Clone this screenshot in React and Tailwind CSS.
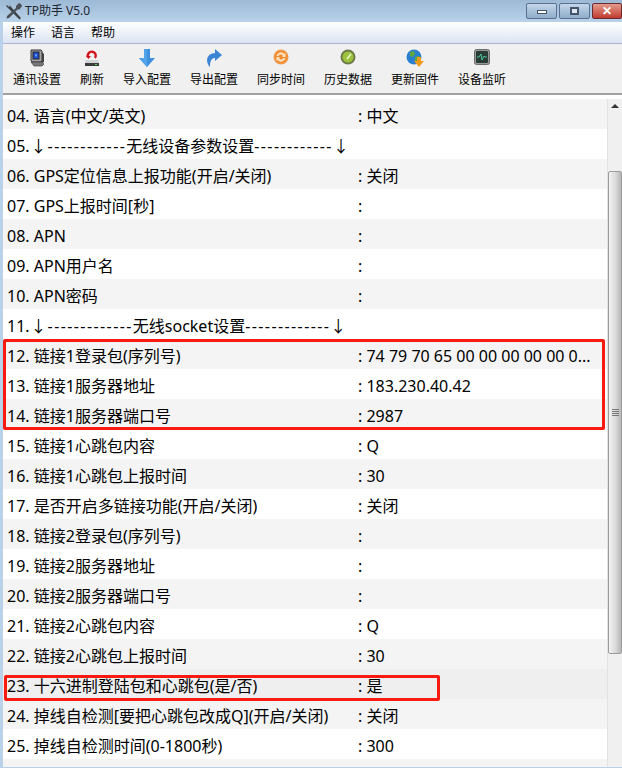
const cjk = "font-['Noto_Sans','Noto_Sans_CJK_SC',sans-serif]";

const rows = [
  ["04. 语言(中文/英文)", ": 中文"],
  ["05. ↓------------无线设备参数设置------------↓", ""],
  ["06. GPS定位信息上报功能(开启/关闭)", ": 关闭"],
  ["07. GPS上报时间[秒]", ":"],
  ["08. APN", ":"],
  ["09. APN用户名", ":"],
  ["10. APN密码", ":"],
  ["11. ↓-------------无线socket设置-------------↓", ""],
  ["12. 链接1登录包(序列号)", ": 74 79 70 65 00 00 00 00 00 0..."],
  ["13. 链接1服务器地址", ": 183.230.40.42"],
  ["14. 链接1服务器端口号", ": 2987"],
  ["15. 链接1心跳包内容", ": Q"],
  ["16. 链接1心跳包上报时间", ": 30"],
  ["17. 是否开启多链接功能(开启/关闭)", ": 关闭"],
  ["18. 链接2登录包(序列号)", ":"],
  ["19. 链接2服务器地址", ":"],
  ["20. 链接2服务器端口号", ":"],
  ["21. 链接2心跳包内容", ": Q"],
  ["22. 链接2心跳包上报时间", ": 30"],
  ["23. 十六进制登陆包和心跳包(是/否)", ": 是"],
  ["24. 掉线自检测[要把心跳包改成Q](开启/关闭)", ": 关闭"],
  ["25. 掉线自检测时间(0-1800秒)", ": 300"],
  ["", ""],
];

function ComputerIcon() {
  return (
    <svg width="18" height="18" viewBox="0 0 18 18">
      <path d="M3 1h10l1 1v10l-1 1H5l-2-1z" fill="#a4a4a8" stroke="#333" />
      <rect x="5" y="3" width="6" height="7" fill="#1f4fd0" stroke="#222" />
      <path d="M7 5l2 1-1 2z" fill="#9cc4f4" />
      <path d="M14 3l2 2v8l-2 1z" fill="#444" />
      <path d="M3 13l3 4h8l2-2-2-2H5z" fill="#77777a" stroke="#333" strokeWidth="0.6" />
    </svg>
  );
}

function RefreshIcon() {
  return (
    <svg width="18" height="18" viewBox="0 0 18 18">
      <path d="M5 8a4 4 0 1 1 7 1" fill="none" stroke="#d4141c" strokeWidth="2.4" />
      <path d="M3 7h5l-2.500 3z" fill="#c8141c" />
      <path d="M3 11h12l1 2v2H2v-2z" fill="#d2d4d6" />
      <rect x="2" y="14" width="14" height="3" fill="#3a3c3e" />
      <rect x="12" y="15" width="2" height="1" fill="#4ee04e" />
    </svg>
  );
}

function DownIcon() {
  return (
    <svg width="18" height="18" viewBox="0 0 18 18">
      <path d="M6 0h6v9h5l-8 9-8-9h5z" fill="#3f8fdc" />
      <path d="M6 0h3v18l-8-9h5z" fill="#52a2ea" />
    </svg>
  );
}

function UpRightIcon() {
  return (
    <svg width="18" height="18" viewBox="0 0 18 18">
      <path d="M10 0l7 6-7 6V9C7 9 5 11 5 18 1 14 0 5 10 4z" fill="#3a86d4" />
    </svg>
  );
}

function SyncIcon() {
  return (
    <svg width="16" height="16" viewBox="0 0 16 16">
      <circle cx="8" cy="8" r="7.500" fill="#ef9a48" />
      <circle cx="8" cy="8" r="6" fill="#f28a2c" />
      <path d="M3.500 7a4.500 4.500 0 0 1 8-2l1-1v4H9l1-1a2.500 2.500 0 0 0-4.500 0zM12.500 9a4.500 4.500 0 0 1-8 2l-1 1V8H7l-1 1a2.500 2.500 0 0 0 4.500 0z" fill="#fbe3c4" />
    </svg>
  );
}

function GaugeIcon() {
  return (
    <svg width="16" height="16" viewBox="0 0 16 16">
      <circle cx="8" cy="8" r="7.500" fill="#6f7a4a" />
      <circle cx="8" cy="8" r="5.500" fill="#9cc23e" />
      <path d="M7 10l4-5" stroke="#eef6d0" strokeWidth="1.500" />
    </svg>
  );
}

function GlobeIcon() {
  return (
    <svg width="18" height="18" viewBox="0 0 18 18">
      <circle cx="8" cy="8" r="7.500" fill="#2b7fd0" />
      <path d="M4 3l4-1 1 3-2 3-3-1zM9 8l4-1 1 3-3 4-2-2z" fill="#5fa83c" />
      <path d="M11 8h4v4h3l-5 6-5-6h3z" fill="#f29a1c" />
    </svg>
  );
}

function MonitorIcon() {
  return (
    <svg width="16" height="16" viewBox="0 0 16 16">
      <rect x="0.500" y="0.500" width="15" height="15" rx="2" fill="#9a9c9a" stroke="#6a6c6a" />
      <rect x="2" y="2" width="12" height="12" rx="1" fill="#2a3a36" />
      <path d="M3 8h2l2-3 1 6 2-4 1 1h2" fill="none" stroke="#4fd6a0" strokeWidth="0.900" />
    </svg>
  );
}

const tools = [
  ["通讯设置", <ComputerIcon />],
  ["刷新", <RefreshIcon />],
  ["导入配置", <DownIcon />],
  ["导出配置", <UpRightIcon />],
  ["同步时间", <SyncIcon />],
  ["历史数据", <GaugeIcon />],
  ["更新固件", <GlobeIcon />],
  ["设备监听", <MonitorIcon />],
];

function TitleBar() {
  return (
    <div className="h-[22px] flex items-center justify-between bg-gradient-to-b from-[#9db9d5] to-[#b9d2ea]">
      <div className="flex items-center">
        <svg width="18" height="18" viewBox="0 0 18 18" className="ml-[5px]">
          <path d="M3 1l4 5 9 10-1.500 1.500L5 8 1 4l1-1 2 2 1-1z" fill="#3c4248" />
          <path d="M16 2l-2-1-3 3v2L2 14l-.5 2.500L4 16l8.500-8.500h2L17 4z" fill="#4a5056" />
        </svg>
        <span className={`ml-[2px] text-[12px] text-[#1c2630] ${cjk}`}>TP助手 V5.0</span>
      </div>
      <div className="flex gap-[2px] self-start">
        <div className="w-[31px] h-[16px] mt-[3px] rounded-[2px] border border-[#5a6f92] bg-gradient-to-b from-[#c4d6ea] to-[#8fadca] flex items-center justify-center">
          <div className="w-[10px] h-[4px] mt-[2px] bg-white border border-[#44546a]" />
        </div>
        <div className="w-[31px] h-[16px] mt-[3px] rounded-[2px] border border-[#5a6f92] bg-gradient-to-b from-[#c4d6ea] to-[#8fadca] flex items-center justify-center">
          <div className="w-[9px] h-[8px] border-2 border-[#44546a] bg-[#dfe8f2]" />
        </div>
        <div className="w-[30px] h-[16px] mt-[3px] rounded-[2px] border border-[#6b2a30] bg-gradient-to-b from-[#e29a8c] to-[#c0392e] flex items-center justify-center text-white text-[12px] font-bold leading-none font-['Liberation_Sans',sans-serif]">
          ✕
        </div>
      </div>
    </div>
  );
}

function Toolbar() {
  return (
    <div className="h-[51px] bg-[#f0f0f0] flex pl-[10px] gap-[19px] border-b-2 border-b-[#a0a0a0]">
      {tools.map(([label, icon]) => (
        <div key={label} className="flex flex-col items-center">
          <div className="h-[29px] pt-[5px] flex items-start justify-center">{icon}</div>
          <div className={`text-[12px] leading-[14px] text-black ${cjk}`}>{label}</div>
        </div>
      ))}
    </div>
  );
}

// the dashes in the separator rows are wider in the original font
function RowLabel({ text }) {
  const parts = text.split(/(-{5,})/);
  if (parts.length < 3) return text;
  const head = parts[0].replace("↓", "").trimEnd();
  return (
    <>
      {head}
      <span className="ml-[1px] mr-[1px]">↓</span>
      {parts.slice(1).map((part, i) =>
        part.startsWith("-----") ? (
          <span key={i} className="tracking-[1.4px]">{part}</span>
        ) : (
          <span key={i}>{part}</span>
        )
      )}
    </>
  );
}

function Row({ label, value, index }) {
  let bg = index % 2 === 0 ? "bg-[#f4f4f4]" : "bg-white";
  if (label.startsWith("23.")) bg = "bg-[#efefef]";
  return (
    <div className={`h-[30px] shrink-0 flex items-center pl-[4px] pt-[3px] text-[16px] text-black ${bg}`}>
      <div className="w-[351px] whitespace-nowrap"><RowLabel text={label} /></div>
      <div className="whitespace-nowrap">{value}</div>
    </div>
  );
}

function Scrollbar() {
  return (
    <div className="w-[15px] shrink-0 bg-[#f0f0f0] border-l border-[#e2e2e2] flex flex-col items-center">
      <div className="h-[72px] pt-[5px] w-full flex justify-center">
        <div className="w-0 h-0 border-x-[4px] border-x-transparent border-b-[4px] border-b-[#333]" />
      </div>
      <div className="h-[483px] w-full rounded-[2px] border border-[#9c9c9c] bg-gradient-to-r from-[#f2f2f2] via-[#dcdcdc] to-[#b8b8b8] flex flex-col gap-[1px] items-center justify-center">
        <div className="w-[7px] h-[1px] bg-[#777]" />
        <div className="w-[7px] h-[1px] bg-[#777]" />
        <div className="w-[7px] h-[1px] bg-[#777]" />
        <div className="w-[7px] h-[1px] bg-[#777]" />
      </div>
    </div>
  );
}

export default function App() {
  return (
    <div className={`relative w-[622px] h-[768px] overflow-hidden bg-[#b9d2ea] ${cjk}`}>
      <TitleBar />
      <div className="ml-[3px]">
        <div className="h-[22px] flex items-center gap-[16px] pl-[8px] pt-[1px] text-[12px] text-black bg-gradient-to-b from-white to-[#dbe3f3] border-b border-[#a9b6cf]">
          <span>操作</span>
          <span>语言</span>
          <span>帮助</span>
        </div>
        <Toolbar />
        <div className="h-[672px] flex bg-white pt-[4px]">
          <div className="flex-1 flex flex-col overflow-hidden">
            {rows.map(([label, value], i) => (
              <Row key={i} label={label} value={value} index={i} />
            ))}
          </div>
          <Scrollbar />
        </div>
      </div>
      {/* red annotation boxes */}
      <div className="absolute left-[3px] top-[339px] w-[602px] h-[91px] rounded-[2px] border-[3px] border-[#fa1a12]" />
      <div className="absolute left-[4px] top-[675px] w-[436px] h-[26px] rounded-[2px] border-[3px] border-[#fa1a12]" />
    </div>
  );
}
